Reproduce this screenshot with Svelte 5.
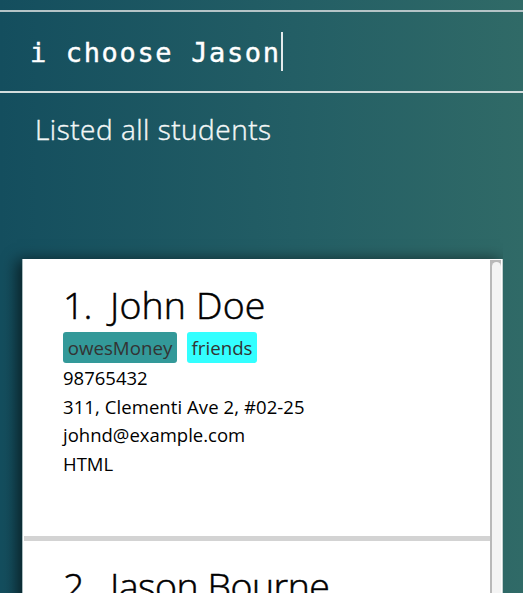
<script>
  const students = [
    {
      name: 'John Doe',
      tags: [
        { label: 'owesMoney', tone: 'teal' },
        { label: 'friends', tone: 'cyan' }
      ],
      details: ['98765432', '311, Clementi Ave 2, #02-25', 'johnd@example.com', 'HTML']
    },
    { name: 'Jason Bourne', tags: [], details: [] }
  ];
</script>

<main>
  <div class="command"><span class="typed">i choose Jason</span><span class="caret"></span></div>
  <div class="result">Listed all students</div>
  <section class="panel">
    <div class="list">
      {#each students as student, i}
        <article>
          <h2 class="n{i + 1}"><span class="index">{i + 1}.</span><span class="name">{student.name}</span></h2>
          <div class="tags">
            {#each student.tags as tag}
              <span class="tag {tag.tone}">{tag.label}</span>
            {/each}
          </div>
          {#each student.details as line, j}
            <p class="d{j}">{line}</p>
          {/each}
        </article>
      {/each}
    </div>
    <div class="scrollbar"><div class="thumb"></div></div>
  </section>
</main>

<style>
  :global(body) { margin: 0; }
  main {
    box-sizing: border-box;
    width: 523px;
    height: 593px;
    padding-top: 10px;
    overflow: hidden;
    display: flex;
    flex-direction: column;
    background: linear-gradient(90deg, #144e5e, #235e65 56%, #306a67);
    font-family: 'Open Sans', 'Noto Sans', sans-serif;
  }
  .command {
    box-sizing: border-box;
    flex: none;
    height: 83px;
    border-top: 2px solid #b5c4c7;
    border-bottom: 2px solid #d3dddd;
    padding-left: 30px;
    display: flex;
    align-items: center;
    color: #fff;
  }
  .typed {
    font: 27px/40px 'DejaVu Sans Mono', monospace;
    letter-spacing: 1.65px;
    white-space: pre;
    padding-top: 2px;
    -webkit-text-stroke: 0.4px #fff;
  }
  .caret { width: 2px; height: 39px; background: #e3eaeb; }
  .result {
    flex: none;
    height: 166px;
    box-sizing: border-box;
    padding: 16px 0 0 35px;
    color: #f4f7f7;
    font-size: 28px;
    line-height: 40px;
    font-weight: 300;
    letter-spacing: 0.5px;
    -webkit-text-stroke: 0.4px #f4f7f7;
    white-space: nowrap;
  }
  .panel {
    flex: none;
    width: 481px;
    height: 360px;
    margin-left: 22px;
    box-sizing: border-box;
    border-left: 1px solid #a9bcbf;
    border-right: 1px solid #c4d2d1;
    display: flex;
    background: #fff;
    box-shadow: -4px 2px 14px 1px rgba(0, 0, 0, 0.6);
    clip-path: inset(-30px 0 0 -30px);
  }
  .list { flex: none; width: 467px; padding-left: 1px; box-sizing: border-box; }
  article {
    height: 282px;
    box-sizing: border-box;
    border-bottom: 5px solid #d3d3d3;
    padding: 19px 0 0 39px;
    color: #000;
  }
  article + article { padding-top: 18px; }
  h2 {
    display: flex;
    margin: 0 0 1px;
    height: 53px;
    font-size: 37.5px;
    line-height: 53px;
    font-weight: 300;
    -webkit-text-stroke: 0.5px #000;
    white-space: nowrap;
  }
  .index { width: 47px; letter-spacing: -1px; }
  .name { letter-spacing: 0.15px; }
  .n2 .name { letter-spacing: -0.5px; }
  .tags { display: flex; gap: 10px; height: 31px; margin-bottom: 1px; }
  .tag {
    box-sizing: border-box;
    height: 31px;
    border-radius: 3px;
    text-align: center;
    font-size: 18.7px;
    line-height: 32px;
    color: #333;
  }
  .teal { width: 114px; background: #339999; }
  .cyan { width: 70px; background: #33ffff; }
  p { margin: 0; font-size: 18.5px; line-height: 28.6px; white-space: nowrap; }
  .d1 { letter-spacing: 0.08px; }
  .scrollbar {
    flex: 1;
    box-sizing: border-box;
    margin-top: 1px;
    border-left: 2px solid #b9b9b9;
    border-right: 1px solid #fff;
    background: #b9b9b9;
  }
  .thumb { height: 400px; margin-top: 2px; border-radius: 5px 5px 0 0; background: #f4f4f4; }
</style>
